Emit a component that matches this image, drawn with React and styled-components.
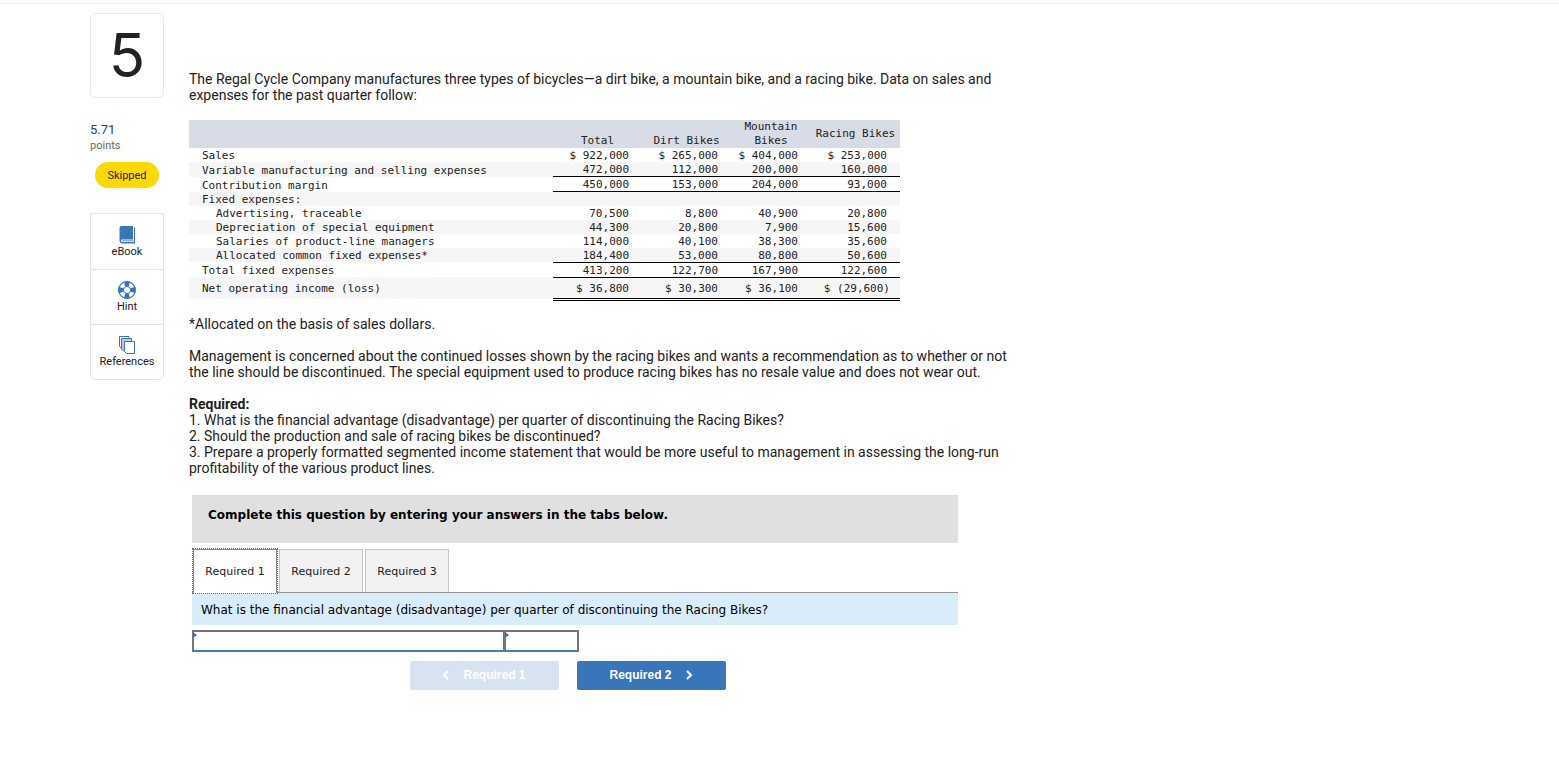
import React, { useState } from 'react';
import styled, { createGlobalStyle, css } from 'styled-components';

const columns = ['Total', 'Dirt Bikes', 'Mountain Bikes', 'Racing Bikes'];

const rows = [
  { label: 'Sales', values: ['$ 922,000', '$ 265,000', '$ 404,000', '$ 253,000'] },
  {
    label: 'Variable manufacturing and selling expenses',
    values: ['472,000', '112,000', '200,000', '160,000'],
    line: 'single',
  },
  {
    label: 'Contribution margin',
    values: ['450,000', '153,000', '204,000', '93,000'],
    line: 'single',
  },
  { label: 'Fixed expenses:', values: ['', '', '', ''] },
  { label: 'Advertising, traceable', values: ['70,500', '8,800', '40,900', '20,800'], indent: true },
  {
    label: 'Depreciation of special equipment',
    values: ['44,300', '20,800', '7,900', '15,600'],
    indent: true,
  },
  {
    label: 'Salaries of product-line managers',
    values: ['114,000', '40,100', '38,300', '35,600'],
    indent: true,
  },
  {
    label: 'Allocated common fixed expenses*',
    values: ['184,400', '53,000', '80,800', '50,600'],
    indent: true,
    line: 'single',
  },
  {
    label: 'Total fixed expenses',
    values: ['413,200', '122,700', '167,900', '122,600'],
    line: 'single',
  },
  {
    label: 'Net operating income (loss)',
    values: ['$ 36,800', '$ 30,300', '$ 36,100', '$ (29,600)'],
    line: 'double',
  },
];

const tabs = ['Required 1', 'Required 2', 'Required 3'];

const BookIcon = () => (
  <svg width="16" height="18" viewBox="0 0 16 18" aria-hidden="true">
    <path d="M2.5 0H14v13.5H3.2a1.2 1.2 0 0 0 0 2.6H15V1.5h1V17.5H3A2.6 2.6 0 0 1 .5 15V2A2 2 0 0 1 2.5 0Z" fill="#3875b9" />
    <path d="M3 14.8h11.5" stroke="#3875b9" strokeWidth="0.8" />
  </svg>
);

const HintIcon = () => (
  <svg width="18" height="18" viewBox="0 0 18 18" fill="none" aria-hidden="true">
    <circle cx="9" cy="9" r="8.4" stroke="#3875b9" strokeWidth="1.2" />
    <circle cx="9" cy="9" r="3.6" stroke="#3875b9" />
    <path d="M6 .8h6l-1.2 4.8H7.2ZM6 17.2h6l-1.2-4.8H7.2ZM.8 6v6l4.8-1.2V7.2ZM17.2 6v6l-4.8-1.2V7.2Z" fill="#3875b9" />
  </svg>
);

const PagesIcon = () => (
  <svg width="16" height="18" viewBox="0 0 16 18" stroke="#3875b9" aria-hidden="true">
    <path d="M.5 .5h9.5v12H2.5l-2-2Z" fill="#fff" />
    <path d="M2.5 2.5h10v12.5h-8l-2-2Z" fill="#b9c9e2" />
    <path d="M5.5 5.5h10v12H7.5l-2-2Z" fill="#fff" />
  </svg>
);

const Chevron = ({ left }) => (
  <svg width="8" height="10" viewBox="0 0 8 10" fill="none" stroke="#fff" strokeWidth="2" aria-hidden="true">
    <path d={left ? 'M6 1L2 5l4 4' : 'M2 1l4 4-4 4'} />
  </svg>
);

const tools = [
  { name: 'eBook', Icon: BookIcon },
  { name: 'Hint', Icon: HintIcon },
  { name: 'References', Icon: PagesIcon },
];

const App = () => {
  const [tab, setTab] = useState(0);

  return (
    <>
      <GlobalStyle />
      <TopBar />
      <Page>
        <Sidebar>
          <QuestionNumber>5</QuestionNumber>
          <Score>
            5.71
            <small>points</small>
          </Score>
          <Status>Skipped</Status>
          <Tools>
            {tools.map(({ name, Icon }) => (
              <ToolButton key={name} type="button">
                <Icon />
                {name}
              </ToolButton>
            ))}
          </Tools>
        </Sidebar>

        <Content>
          <Paragraph>
            The Regal Cycle Company manufactures three types of bicycles—a dirt bike, a mountain bike, and a racing
            bike. Data on sales and
            <br />
            expenses for the past quarter follow:
          </Paragraph>

          <Statement>
            <colgroup>
              <col className="label" />
              <col className="value" />
              <col className="value" />
              <col className="narrow" />
              <col className="value" />
            </colgroup>
            <thead>
              <tr>
                <HeadCell aria-label="Item" />
                {columns.map((name, i) => (
                  <HeadCell key={name} scope="col" $middle={i === 3}>
                    {name}
                  </HeadCell>
                ))}
              </tr>
            </thead>
            <tbody>
              {rows.map((row) => (
                <Row key={row.label} $tall={row.line === 'double'}>
                  <LabelCell scope="row" $indent={row.indent}>
                    {row.label}
                  </LabelCell>
                  {row.values.map((value, i) => (
                    <ValueCell key={i} $line={row.line} $negative={value.includes('(')}>
                      {value}
                    </ValueCell>
                  ))}
                </Row>
              ))}
            </tbody>
          </Statement>

          <Paragraph>*Allocated on the basis of sales dollars.</Paragraph>
          <Paragraph>
            Management is concerned about the continued losses shown by the racing bikes and wants a recommendation as
            to whether or not
            <br />
            the line should be discontinued. The special equipment used to produce racing bikes has no resale value and
            does not wear out.
          </Paragraph>
          <Paragraph>
            <b>Required:</b>
            <br />
            1. What is the financial advantage (disadvantage) per quarter of discontinuing the Racing Bikes?
            <br />
            2. Should the production and sale of racing bikes be discontinued?
            <br />
            3. Prepare a properly formatted segmented income statement that would be more useful to management in
            assessing the long-run
            <br />
            profitability of the various product lines.
          </Paragraph>

          <Worksheet>
            <Instruction>Complete this question by entering your answers in the tabs below.</Instruction>
            <TabList role="tablist">
              {tabs.map((name, i) => (
                <Tab key={name} type="button" role="tab" aria-selected={tab === i} $active={tab === i} onClick={() => setTab(i)}>
                  {name}
                </Tab>
              ))}
            </TabList>
            <Prompt>What is the financial advantage (disadvantage) per quarter of discontinuing the Racing Bikes?</Prompt>
            <Answers>
              <AnswerCell $wide>
                <input type="text" aria-label="Financial advantage or disadvantage" />
              </AnswerCell>
              <AnswerCell>
                <input type="text" aria-label="Amount" />
              </AnswerCell>
            </Answers>
            <Pager>
              <PagerButton type="button" disabled>
                <Chevron left />
                Required 1
              </PagerButton>
              <PagerButton type="button" onClick={() => setTab(1)}>
                Required 2
                <Chevron />
              </PagerButton>
            </Pager>
          </Worksheet>
        </Content>
      </Page>
    </>
  );
};

const GlobalStyle = createGlobalStyle`
  * {
    box-sizing: border-box;
  }
  body {
    margin: 0;
    background: #fff;
    color: #222;
    font-family: Roboto, 'Open Sans', sans-serif;
  }
  button {
    font-family: inherit;
    cursor: pointer;
  }
`;

const TopBar = styled.div`
  height: 4px;
  background: #fcfcfc;
  border-bottom: 1px solid #eee;
`;

const Page = styled.main`
  display: flex;
  align-items: flex-start;
  gap: 25px;
  padding: 9px 90px 40px;
`;

const Sidebar = styled.aside`
  flex: 0 0 74px;
  display: flex;
  flex-direction: column;
`;

const QuestionNumber = styled.div`
  height: 85px;
  border: 1px solid #e8e8e8;
  border-radius: 5px;
  font-family: Inter, sans-serif;
  font-size: 60px;
  line-height: 83px;
  text-align: center;
`;

const Score = styled.div`
  margin-top: 23px;
  color: #1a4388;
  font-size: 13px;
  line-height: 17px;
  small {
    display: block;
    color: #666;
    font-size: 11px;
    line-height: 16px;
  }
`;

const Status = styled.div`
  align-self: center;
  margin-top: 8px;
  padding: 2px 12px 0;
  border-radius: 13px;
  background: #ffd900;
  font-size: 11px;
  line-height: 24px;
`;

const Tools = styled.div`
  margin-top: 25px;
  border: 1px solid #e4e4e4;
  border-radius: 0 0 5px 5px;
`;

const ToolButton = styled.button`
  display: flex;
  flex-direction: column;
  align-items: center;
  justify-content: center;
  width: 100%;
  height: 55px;
  padding: 2px 0 0;
  border: 0;
  background: none;
  color: #222;
  font-size: 11px;
  line-height: 16px;
  & + & {
    border-top: 1px solid #e4e4e4;
  }
`;

const Content = styled.section`
  flex: 1;
  max-width: 860px;
  padding-top: 58px;
`;

const Paragraph = styled.p`
  margin: 0 0 16px;
  font-size: 14px;
  line-height: 16px;
`;

const Statement = styled.table`
  width: 711px;
  max-width: 100%;
  margin: 17px 0 15px;
  border-collapse: collapse;
  table-layout: fixed;
  font-family: 'DejaVu Sans Mono', monospace;
  font-size: 11px;
  line-height: 14px;
  .label {
    width: 364px;
  }
  .value {
    width: 89px;
  }
  .narrow {
    width: 80px;
  }
`;

const HeadCell = styled.th`
  padding: 0 4px;
  background: #d8dce6;
  font-weight: 400;
  vertical-align: ${({ $middle }) => ($middle ? 'middle' : 'bottom')};
`;

const Row = styled.tr`
  height: ${({ $tall }) => ($tall ? '22px' : 'auto')};
  line-height: 12px;
  &:nth-child(even) {
    background: #f6f6f6;
  }
`;

const LabelCell = styled.th`
  padding: 2px 0 0 ${({ $indent }) => ($indent ? '27px' : '13px')};
  font-weight: 400;
  text-align: left;
  vertical-align: bottom;
  ${Row}:last-child & {
    vertical-align: middle;
  }
`;

const lines = {
  single: css`
    border-bottom: 1px solid #000;
  `,
  double: css`
    border-bottom: 3px double #000;
  `,
};

const ValueCell = styled.td`
  height: 14px;
  padding: 2px ${({ $negative }) => ($negative ? '10px' : '13px')} 0 0;
  text-align: right;
  ${({ $line }) => lines[$line]}
`;

const Worksheet = styled.div`
  max-width: 769px;
  padding: 3px 0 0 3px;
  color: #000;
  font-family: 'DejaVu Sans', sans-serif;
  font-size: 12px;
`;

const Instruction = styled.div`
  padding: 11px 16px 19px;
  background: #e0e0e0;
  font-size: 12px;
  font-weight: 700;
  line-height: 18px;
`;

const TabList = styled.div`
  display: flex;
  gap: 2px;
  padding: 6px 1px 0;
  border-bottom: 1px solid #949494;
`;

const Tab = styled.button`
  width: 84px;
  height: 43px;
  padding: 1px 0 0;
  border: 1px solid #c5c5c5;
  border-bottom: 0;
  background: #f2f2f2;
  color: #222;
  font-size: 11px;
  ${({ $active }) =>
    $active &&
    css`
      height: 44px;
      margin-bottom: -1px;
      padding: 0;
      border-color: #888;
      outline: 1px dotted #3875b9;
      background: #fff;
    `}
`;

const Prompt = styled.div`
  padding: 9px 9px 7px;
  background: #d9ecfa;
  line-height: 16px;
`;

const Answers = styled.div`
  display: flex;
  margin-top: 5px;
`;

const AnswerCell = styled.div`
  position: relative;
  width: ${({ $wide }) => ($wide ? '313px' : '75px')};
  border: 1px solid #767676;
  & + & {
    margin-left: -1px;
  }
  input {
    display: block;
    width: 100%;
    height: 20px;
    padding: 0 4px;
    border: 1px solid #3f7cbc;
    outline: none;
    background: #fff;
    font-size: 11px;
  }
  &::before {
    content: '';
    position: absolute;
    top: 1px;
    left: 0;
    border: solid transparent;
    border-width: 3px 0 3px 4px;
    border-left-color: #3875b9;
  }
`;

const Pager = styled.div`
  display: flex;
  justify-content: center;
  gap: 18px;
  margin-top: 9px;
  padding-right: 15px;
`;

const PagerButton = styled.button`
  display: flex;
  align-items: center;
  justify-content: center;
  gap: 13px;
  width: 149px;
  height: 29px;
  padding: 0;
  border: 0;
  border-radius: 2px;
  background: #3875b9;
  color: #fff;
  font-family: 'Liberation Sans', Arial, sans-serif;
  font-size: 12px;
  font-weight: 700;
  &:disabled {
    background: #d7e3f1;
    cursor: default;
  }
`;

export default App;
